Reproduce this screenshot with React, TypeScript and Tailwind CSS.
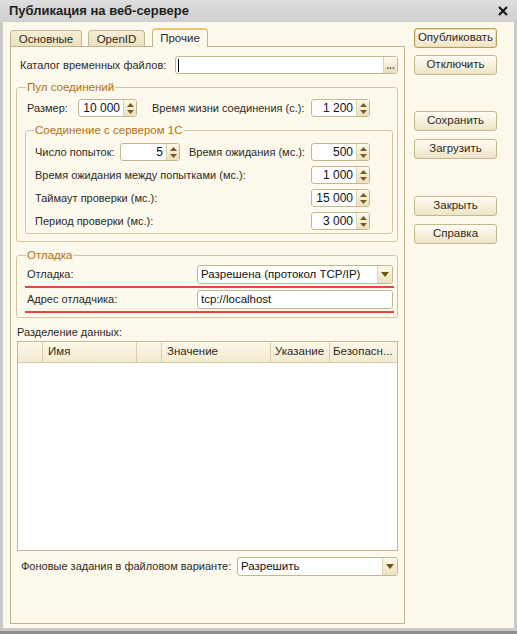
import React from 'react';

const font = "font-['Liberation_Sans',Arial,sans-serif]";

function Arrows() {
  return (
    <div className="w-[13px] shrink-0 border-l border-[#ddd3ae] bg-gradient-to-b from-[#fdf9ea] to-[#ece1bd] flex flex-col items-center justify-center gap-[3px]">
      <svg width="7" height="4" viewBox="0 0 7 4">
        <path d="M0 4 L3.5 0 L7 4 Z" fill="#7a5b1e" />
      </svg>
      <svg width="7" height="4" viewBox="0 0 7 4">
        <path d="M0 0 L7 0 L3.5 4 Z" fill="#7a5b1e" />
      </svg>
    </div>
  );
}

function Spin({ value, w }: { value: string; w: string }) {
  return (
    <div className={`${w} h-[18px] shrink-0 flex border border-[#c2b88f] rounded-[3px] bg-white overflow-hidden`}>
      <div className="flex-1 text-right pr-[3px] leading-[16px] text-[12px] text-[#111]">{value}</div>
      <Arrows />
    </div>
  );
}

function DropButton() {
  return (
    <div className="w-[15px] shrink-0 border-l border-[#ddd3ae] bg-gradient-to-b from-[#fdf9ea] to-[#ece1bd] flex items-center justify-center">
      <svg width="8" height="5" viewBox="0 0 8 5">
        <path d="M0 0 L8 0 L4 5 Z" fill="#6e5219" />
      </svg>
    </div>
  );
}

function Combo({ value, w }: { value: string; w: string }) {
  return (
    <div className={`${w} h-[19px] shrink-0 flex border border-[#c2b88f] rounded-[3px] bg-white overflow-hidden`}>
      <div className="flex-1 pl-[3px] leading-[17px] text-[11.5px] text-[#111]">{value}</div>
      <DropButton />
    </div>
  );
}

function Button({ label, main }: { label: string; main?: boolean }) {
  return (
    <div
      className={`w-[83px] h-[20px] rounded-[3px] border flex items-center justify-center text-[11.5px] bg-gradient-to-b from-[#fffdf5] to-[#eee4c7] ${
        main ? 'border-[#b89d55] shadow-[inset_0_0_0_1px_#f1dfa6]' : 'border-[#c4b88d]'
      }`}
    >
      {label}
    </div>
  );
}

function Group({
  title,
  className,
  legendClass,
  children,
}: {
  title: string;
  className?: string;
  legendClass?: string;
  children: React.ReactNode;
}) {
  return (
    <fieldset className={`border border-[#cfc7a3] rounded-[3px] ${className ?? ''}`}>
      <legend className={`px-[1px] leading-[14px] text-[11.5px] text-[#b06f14] ${legendClass ?? ''}`}>{title}</legend>
      {children}
    </fieldset>
  );
}

export default function App() {
  return (
    <div className={`${font} w-[517px] h-[634px] flex flex-col bg-[#c9c9c9] text-[11px] whitespace-nowrap text-[#2e2a1e] overflow-hidden`}>
      {/* title bar */}
      <div className="h-[22px] shrink-0 flex items-center justify-between pl-[9px] pr-[9px] bg-gradient-to-b from-[#dedede] to-[#cfcfcf]">
        <span className="font-bold text-[13px] text-[#1e1e1e]">Публикация на веб-сервере</span>
        <svg width="10" height="10" viewBox="0 0 10 10">
          <path d="M1 1 L9 9 M9 1 L1 9" stroke="#1a1a1a" strokeWidth="2.2" />
        </svg>
      </div>

      <div className="h-[606px] shrink-0 mx-[3px] bg-[#fdf9ed] flex">
        {/* tabs and page */}
        <div className="pl-[7px] pt-[6px] flex flex-col">
          <div className="h-[18px] flex items-end text-[11.5px]">
            <div className="w-[72px] h-[16px] rounded-t-[4px] border border-b-0 border-[#c0b68d] bg-gradient-to-b from-[#f6eed6] to-[#ebe0c0] flex items-center justify-center leading-[14px]">
              Основные
            </div>
            <div className="ml-[6px] w-[57px] h-[16px] rounded-t-[4px] border border-b-0 border-[#c0b68d] bg-gradient-to-b from-[#f6eed6] to-[#ebe0c0] flex items-center justify-center leading-[14px]">
              OpenID
            </div>
            <div className="relative z-10 -mb-px ml-[7px] w-[56px] h-[19px] rounded-t-[4px] border border-b-0 border-[#c0b68d] border-t-2 border-t-[#f2c46e] bg-[#fdf9ed] flex items-center justify-center">
              Прочие
            </div>
          </div>

          <div className="w-[395px] h-[578px] border border-[#bdb48b] pl-[5px] pr-[6px] pt-[9px] flex flex-col">
            {/* temp files */}
            <div className="flex items-center h-[18px]">
              <span className="w-[159px] pl-[4px] shrink-0">Каталог временных файлов:</span>
              <div className="flex-1 h-[18px] flex border border-[#c2b88f] rounded-[3px] bg-white overflow-hidden">
                <div className="flex-1 pl-[2px] flex items-center">
                  <span className="w-px h-[13px] bg-black" />
                </div>
                <div className="w-[14px] border-l border-[#ddd3ae] bg-gradient-to-b from-[#fdf9ea] to-[#ece1bd] flex items-end justify-center pb-[3px]">
                  <span className="text-[10px] leading-[8px] font-bold text-[#555]">...</span>
                </div>
              </div>
            </div>

            {/* connection pool */}
            <Group title="Пул соединений" legendClass="ml-[1px]" className="mt-[6px] pl-[8px] pr-[4px] pt-[5px] pb-[7px]">
              <div className="flex items-center h-[18px]">
                <span className="w-[53px] pl-[2px] shrink-0">Размер:</span>
                <Spin value="10 000" w="w-[59px]" />
                <span className="w-[174px] pl-[15px] shrink-0">Время жизни соединения (с.):</span>
                <Spin value="1 200" w="w-[59px]" />
              </div>

              <Group title="Соединение с сервером 1С" legendClass="-ml-[1px]" className="mt-[6px] pl-[9px] pt-[6px] pb-[3px]">
                <div className="flex flex-col gap-[5px]">
                  <div className="flex items-center h-[18px]">
                    <span className="w-[85px] shrink-0">Число попыток:</span>
                    <Spin value="5" w="w-[60px]" />
                    <span className="w-[131px] pl-[9px] shrink-0">Время ожидания (мс.):</span>
                    <Spin value="500" w="w-[59px]" />
                  </div>
                  <div className="flex items-center h-[18px]">
                    <span className="w-[276px] shrink-0">Время ожидания между попытками (мс.):</span>
                    <Spin value="1 000" w="w-[59px]" />
                  </div>
                  <div className="flex items-center h-[18px]">
                    <span className="w-[276px] shrink-0">Таймаут проверки (мс.):</span>
                    <Spin value="15 000" w="w-[59px]" />
                  </div>
                  <div className="flex items-center h-[18px]">
                    <span className="w-[276px] shrink-0">Период проверки (мс.):</span>
                    <Spin value="3 000" w="w-[59px]" />
                  </div>
                </div>
              </Group>
            </Group>

            {/* debugging */}
            <Group title="Отладка" legendClass="ml-[1px]" className="mt-[6px] pl-[8px] pr-[3px] pt-[3px] pb-[4px]">
              <div className="flex items-center pb-[2px] border-b-2 border-[#e94545]">
                <span className="w-[172px] pl-[2px] shrink-0">Отладка:</span>
                <Combo value="Разрешена (протокол TCP/IP)" w="w-[196px]" />
              </div>
              <div className="mt-[2px] flex items-center pb-[2px] border-b-2 border-[#e94545]">
                <span className="w-[172px] pl-[2px] shrink-0">Адрес отладчика:</span>
                <div className="w-[196px] h-[19px] border border-[#c2b88f] rounded-[3px] bg-white pl-[3px] leading-[17px] text-[11.5px] text-[#111]">
                  tcp://localhost
                </div>
              </div>
            </Group>

            {/* data separation */}
            <div className="mt-[7px] pl-[1px] leading-[14px]">Разделение данных:</div>
            <div className="mt-[2px] ml-[1px] w-[381px] h-[210px] border border-[#c3b98f] bg-white flex flex-col">
              <div className="h-[21px] flex border-b border-[#d8cfac] bg-gradient-to-b from-[#fcf8ea] to-[#f3ead0] text-[11.5px]">
                <div className="w-[25px] border-r border-[#d8cfac]" />
                <div className="w-[94px] border-r border-[#d8cfac] pl-[5px] flex items-center">Имя</div>
                <div className="w-[25px] border-r border-[#d8cfac]" />
                <div className="w-[109px] border-r border-[#d8cfac] pl-[5px] flex items-center">Значение</div>
                <div className="w-[59px] border-r border-[#d8cfac] pl-[4px] flex items-center">Указание</div>
                <div className="flex-1 pl-[3px] flex items-center overflow-hidden">Безопасн...</div>
              </div>
            </div>

            {/* background jobs */}
            <div className="mt-[6px] flex items-center h-[19px]">
              <span className="w-[221px] pl-[5px] shrink-0">Фоновые задания в файловом варианте:</span>
              <Combo value="Разрешить" w="w-[161px]" />
            </div>
          </div>
        </div>

        {/* command buttons */}
        <div className="ml-[9px] pt-[6px] flex flex-col">
          <Button label="Опубликовать" main />
          <div className="mt-[7px]">
            <Button label="Отключить" />
          </div>
          <div className="mt-[36px]">
            <Button label="Сохранить" />
          </div>
          <div className="mt-[8px]">
            <Button label="Загрузить" />
          </div>
          <div className="mt-[37px]">
            <Button label="Закрыть" />
          </div>
          <div className="mt-[8px]">
            <Button label="Справка" />
          </div>
        </div>
      </div>

      <div className="h-[3px] shrink-0" />
      <div className="flex-1 bg-[#8e8e8e]" />
    </div>
  );
}
